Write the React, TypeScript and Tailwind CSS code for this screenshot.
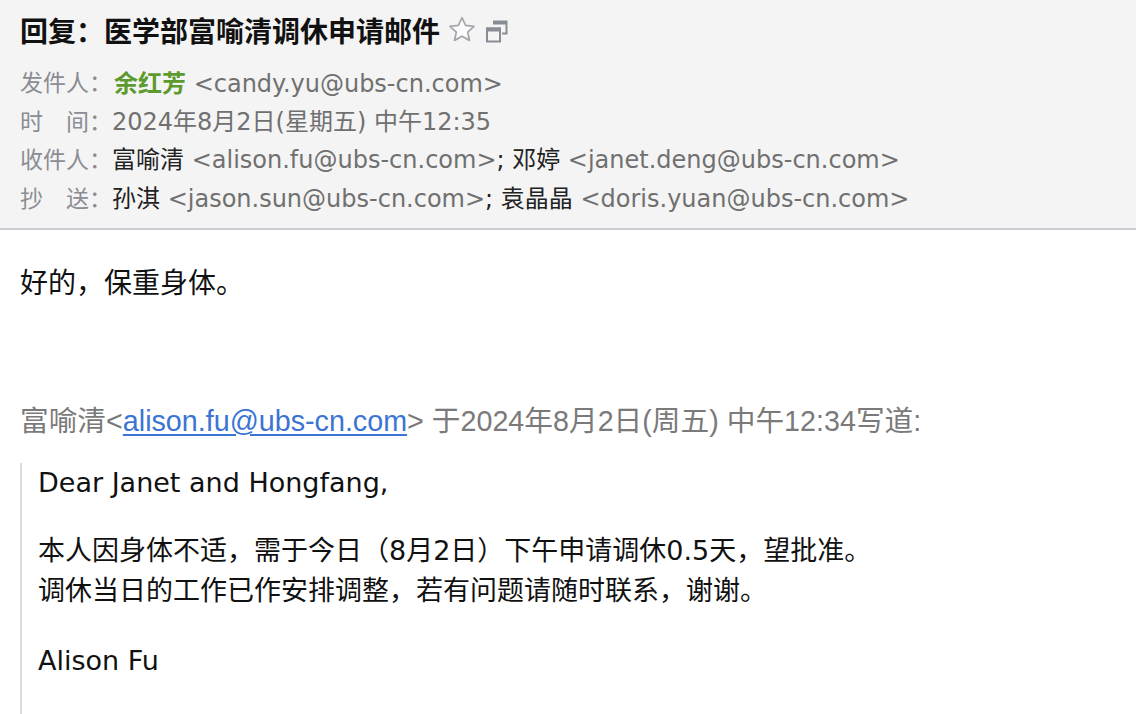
import React from 'react'

const cjk = '"Noto Sans CJK SC"'

function StarIcon() {
  return (
    <svg width="28" height="28" viewBox="0 0 24 24" className="shrink-0">
      <path
        d="M12 1.5l3.1 6.6 7.2.8-5.4 4.9 1.5 7.1L12 17.3l-6.4 3.6 1.5-7.1-5.4-4.9 7.2-.8z"
        fill="#fbfbfb"
        stroke="#a3a7ad"
        strokeWidth="1.5"
        strokeLinejoin="round"
      />
    </svg>
  )
}

function WindowIcon() {
  return (
    <svg width="23" height="23" viewBox="0 0 23 23" className="shrink-0">
      <path d="M8 1.5h13.5v12H17" fill="none" stroke="#878c95" strokeWidth="2" />
      <rect x="8" y="1" width="14" height="3.5" fill="#878c95" />
      <rect x="2" y="8.5" width="13" height="13" fill="none" stroke="#878c95" strokeWidth="2" />
      <rect x="1" y="7.5" width="15" height="4" fill="#878c95" />
    </svg>
  )
}

function HeaderRow({ label, children }: { label: string; children: React.ReactNode }) {
  return (
    <div className="flex items-center h-[38.5px] whitespace-nowrap">
      <span className="text-[#8a8d93] text-[23px] w-[92px] shrink-0">{label}</span>
      <span className="text-[#222] text-[24px]">{children}</span>
    </div>
  )
}

const Addr = ({ children }: { children: React.ReactNode }) => (
  <span className="text-[#707070]">{children}</span>
)

export default function App() {
  return (
    <div className="w-[1136px] h-[714px] overflow-hidden bg-white">
      {/* mail header */}
      <div
        className="bg-[#f4f4f4] border-b-2 border-[#c9ccd2] px-5 pt-[10px] pb-[10px]"
        style={{ fontFamily: `"DejaVu Sans", ${cjk}, sans-serif` }}
      >
        <div className="flex items-center gap-[8px] h-[40px]">
          <h1
            className="text-[28px] font-bold text-[#111] leading-none"
            style={{ fontFamily: `${cjk}, sans-serif` }}
          >
            回复：医学部富喻清调休申请邮件
          </h1>
          <StarIcon />
          <div className="ml-[1px] mt-[3px]">
            <WindowIcon />
          </div>
        </div>
        <div className="mt-[14px]">
          <HeaderRow label="发件人：">
            <span className="text-[#5c9a2e] font-bold ml-[2px]" style={{ fontFamily: `${cjk}, sans-serif` }}>
              余红芳
            </span>{' '}
            <Addr>&lt;candy.yu@ubs-cn.com&gt;</Addr>
          </HeaderRow>
          <HeaderRow label="时　间：">
            <span className="text-[#707070]">2024年8月2日(星期五) 中午12:35</span>
          </HeaderRow>
          <HeaderRow label="收件人：">
            富喻清 <Addr>&lt;alison.fu@ubs-cn.com&gt;</Addr>; 邓婷 <Addr>&lt;janet.deng@ubs-cn.com&gt;</Addr>
          </HeaderRow>
          <HeaderRow label="抄　送：">
            孙淇 <Addr>&lt;jason.sun@ubs-cn.com&gt;</Addr>; 袁晶晶 <Addr>&lt;doris.yuan@ubs-cn.com&gt;</Addr>
          </HeaderRow>
        </div>
      </div>

      {/* body */}
      <div className="px-5 text-[#111]" style={{ fontFamily: `"DejaVu Sans", ${cjk}, sans-serif` }}>
        <p className="mt-[31px] text-[28px] leading-[40px]" style={{ fontFamily: `${cjk}, sans-serif` }}>
          好的，保重身体。
        </p>

        <p
          className="mt-[100px] text-[28.7px] leading-[40px] text-[#7a7a7a] whitespace-nowrap"
          style={{ fontFamily: `"Liberation Sans", ${cjk}, sans-serif` }}
        >
          富喻清&lt;<span className="text-[#3b74d4] underline underline-offset-[3px]">alison.fu@ubs-cn.com</span>&gt; 于2024年8月2日(周五) 中午12:34写道:
        </p>

        <blockquote className="mt-[22px] border-l-2 border-[#dcdcdc] pl-4 text-[27px] leading-[40px] h-[260px]">
          <p>Dear Janet and Hongfang,</p>
          <p className="mt-[28px]">
            本人因身体不适，需于今日（8月2日）下午申请调休0.5天，望批准。
            <br />
            调休当日的工作已作安排调整，若有问题请随时联系，谢谢。
          </p>
          <p className="mt-[30px]">Alison Fu</p>
        </blockquote>
      </div>
    </div>
  )
}
